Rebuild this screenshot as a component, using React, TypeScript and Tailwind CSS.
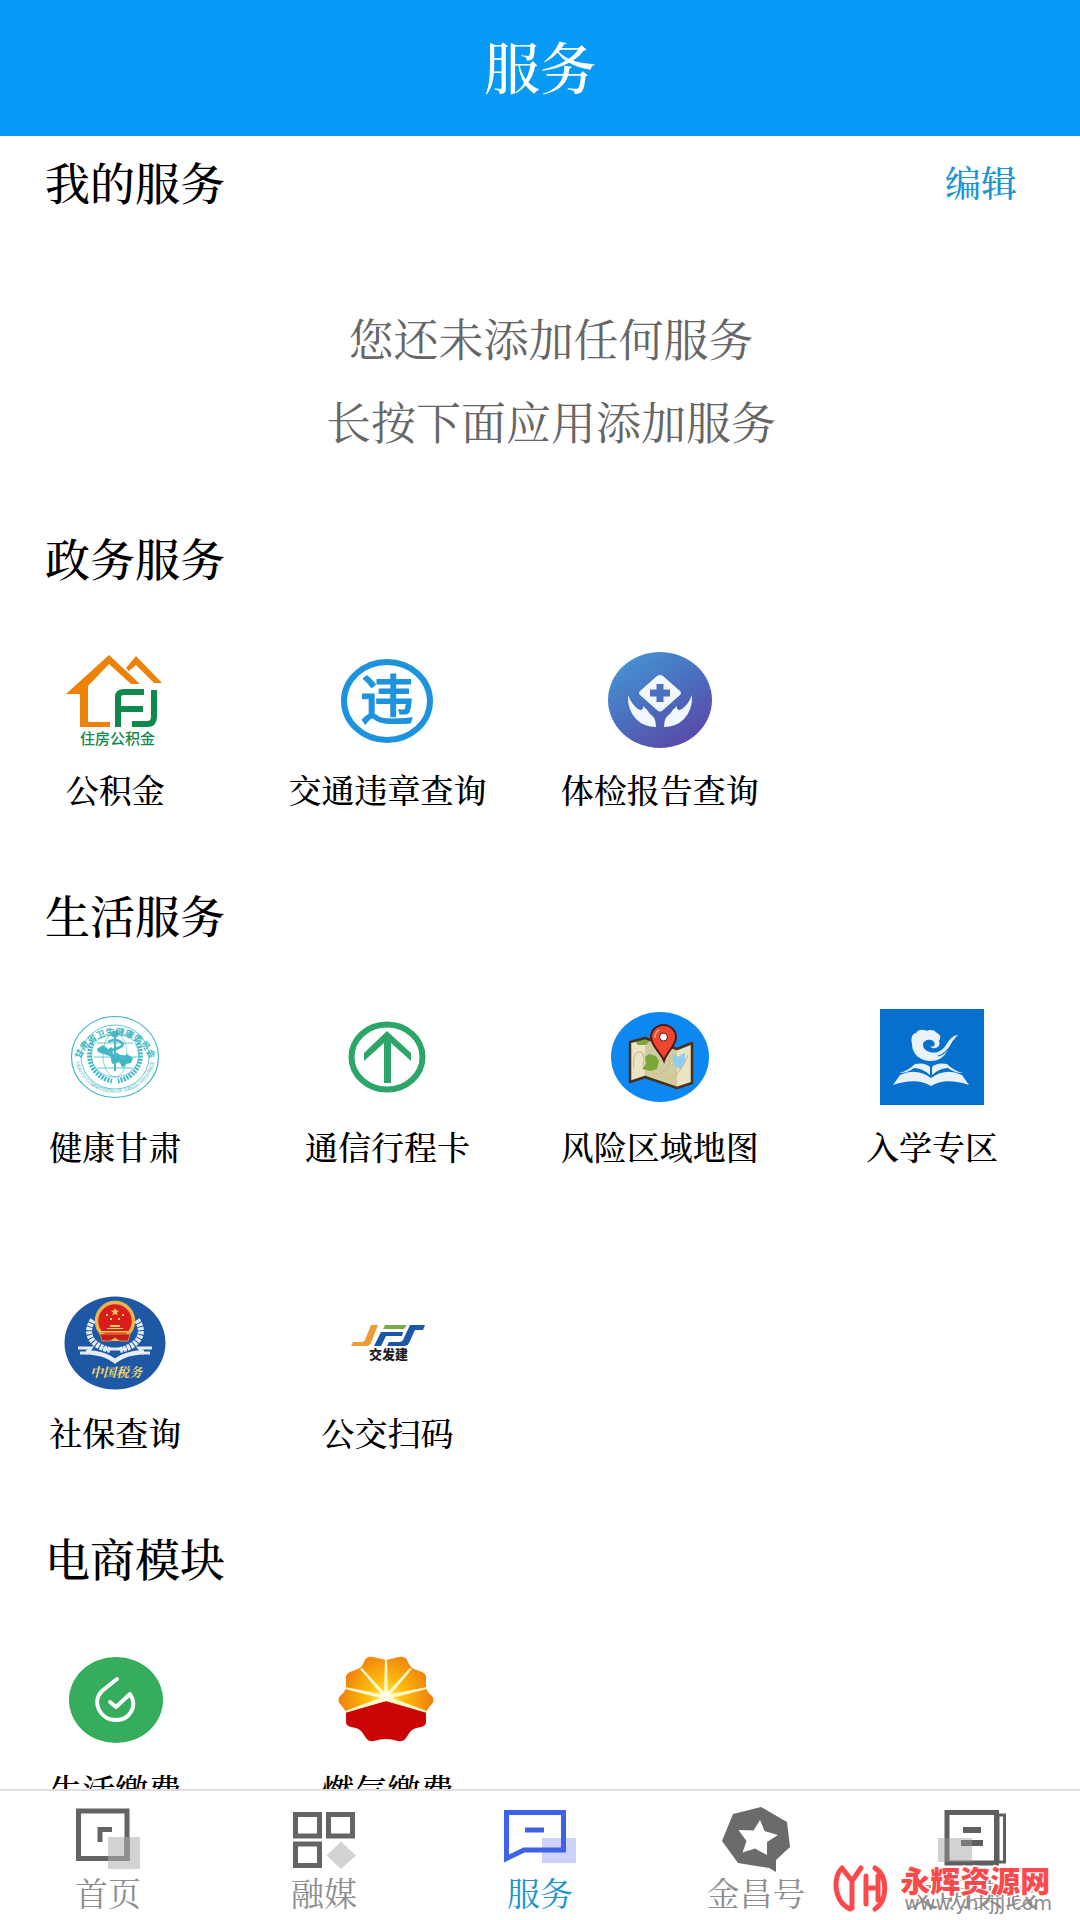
import React from 'react';

type Service = { name: string; icon: React.ReactNode };

const sans = "'Noto Sans CJK SC', sans-serif";
const serif = "'Noto Serif CJK SC', 'Noto Sans CJK SC', serif";

const Icon: React.FC<{ children: React.ReactNode }> = ({ children }) => (
    <svg viewBox="0 0 104 96" className="w-[104px] h-24" aria-hidden="true">{children}</svg>
);

const HousingFundIcon = () => (
    <Icon>
        <path fill="#ee8208" d="M3 42 46 3 77 32H68L46 12 25 34V70H47V75H17V42Z" />
        <path fill="#ee8208" d="M63 16 73 4 99 31H91L73 13 66 19Z" />
        <path fill="none" stroke="#0f8a4c" strokeWidth="6" d="M55 75V45Q55 40 61 40H81M55 57H80M91 38V65Q91 72 84 72H69" />
        <text x="17" y="92" fontSize="15" fontWeight="500" fill="#0f8a4c" style={{ fontFamily: sans }}>住房公积金</text>
    </Icon>
);

const TrafficIcon = () => (
    <Icon>
        <ellipse cx="52" cy="49" rx="43" ry="39" fill="none" stroke="#1c93dc" strokeWidth="6" />
        <text x="52" y="68" fontSize="54" fontWeight="500" textAnchor="middle" fill="#1c93dc" stroke="#1c93dc" strokeLinejoin="round" style={{ fontFamily: sans }}>违</text>
    </Icon>
);

const CheckupIcon = () => (
    <Icon>
        <defs>
            <linearGradient id="checkup" x1="0.1" y1="0" x2="0.8" y2="1">
                <stop offset="0" stopColor="#4597d4" />
                <stop offset="0.5" stopColor="#4b6fc0" />
                <stop offset="1" stopColor="#5b46a4" />
            </linearGradient>
        </defs>
        <ellipse cx="52" cy="48" rx="52" ry="48" fill="url(#checkup)" />
        <g fill="#f1f8fd">
            <path d="M49 24Q52 22 55 24L72 39Q74 41 72 43L55 58Q52 61 49 58L32 43Q30 41 32 39Z" />
            <path d="M20 43Q24 54 32 58Q36 58 35 54Q40 58 42 62Q48 65 48 75Q36 75 28 67Q19 57 20 43Z" />
            <path d="M84 43Q80 54 72 58Q68 58 69 54Q64 58 62 62Q56 65 56 75Q68 75 76 67Q85 57 84 43Z" />
        </g>
        <path stroke="#4b70bf" strokeWidth="7" d="M42 41H62M52 32V50" />
    </Icon>
);

const HealthIcon = () => (
    <Icon>
        <defs>
            <path id="health-top" d="M16 60A36 34 0 1 1 88 60" />
            <path id="health-bottom" d="M12 46A40 38 0 0 0 92 46" />
        </defs>
        <g fill="none" stroke="#43b7c4">
            <ellipse cx="52" cy="48" rx="43.500" ry="40.500" strokeWidth="1.200" />
            <ellipse cx="52" cy="48" rx="34" ry="32" strokeWidth="0.800" />
            <ellipse cx="52" cy="46" rx="24" ry="22" strokeWidth="0.700" />
            <ellipse cx="52" cy="46" rx="12" ry="22" strokeWidth="0.600" />
            <path strokeWidth="0.800" d="M31 48H74M52 38V62M34 34H70M34 59H70" />
            <path strokeWidth="5" strokeDasharray="2 1.200" d="M29 34C22 52 31 68 49 72M75 34C82 52 73 68 55 72" />
            <path strokeWidth="2.500" d="M45 33Q52 29 58 33T49 41T56 47T49 53" />
        </g>
        <g fill="#43b7c4">
            <circle cx="52" cy="25" r="3.500" />
            <path d="M34 40 40 36 45 40 49 38 50 45 55 44 59 49 64 45 70 49 68 54 63 55 60 59 56 53 49 55 47 46 40 45 35 43Z" />
            <path d="M51 28H53V62H51Z" />
            <text fontSize="9" fontWeight="700" style={{ fontFamily: sans }}>
                <textPath href="#health-top" startOffset="50%" textAnchor="middle">甘肃省卫生健康委员会</textPath>
            </text>
            <text fontSize="5" style={{ fontFamily: "'Liberation Sans', sans-serif" }}>
                <textPath href="#health-bottom" startOffset="50%" textAnchor="middle">HEALTH COMMISSION OF GANSU PROVINCE</textPath>
            </text>
        </g>
    </Icon>
);

const TravelIcon = () => (
    <Icon>
        <ellipse cx="52" cy="48" rx="35.500" ry="32.500" fill="none" stroke="#2ca568" strokeWidth="6" />
        <path fill="#2ca568" d="M52 22 76 44V52L56 34V74H49V34L29 52V44Z" />
    </Icon>
);

const MapIcon = () => (
    <Icon>
        <ellipse cx="52" cy="48" rx="49" ry="45" fill="#0d88f0" />
        <path fill="#e9e5c4" d="M22 33 37 29 69 40 84 34V74L69 79 37 68 22 73Z" />
        <path fill="#cfcda0" d="M37 29 69 40V79L37 68Z" />
        <path fill="#7ba63a" d="M27 32 37 29 42 32 38 36 30 36ZM37 48 41 45 48 47 51 52 49 60 43 62 34 60 38 55Z" />
        <path fill="#8fcdf0" d="M64 45 69 48 77 44 77 53 73 61 66 56Z" />
        <path fill="none" stroke="#d9b98c" strokeWidth="1.200" d="M26 60Q24 44 31 43T35 58M44 65Q58 66 61 54T54 43M58 70Q67 68 72 61T80 46" />
        <path fill="none" stroke="#4a2e22" strokeWidth="2.500" strokeLinejoin="round" d="M22 33 37 29 69 40 84 34V74L69 79 37 68 22 73Z" />
        <path fill="#f0442d" stroke="#4a1d1a" strokeWidth="2" d="M56 52C52 42 43 37 43 28A12.500 12 0 0 1 68 28C68 37 59 42 56 52Z" />
        <circle cx="55.500" cy="28" r="4" fill="#fff" stroke="#4a1d1a" />
        <path fill="none" stroke="#ff9d8c" strokeWidth="1.500" d="M47 29Q47 23 51 21" />
    </Icon>
);

const SchoolIcon = () => (
    <Icon>
        <rect width="104" height="96" fill="#0670cd" />
        <g fill="#e9f1f9">
            <path d="M78 26C68 27 67 39 60 42C53 46 43 42 43 36C43 31 51 29 54 33C56 36 53 39 50 37C53 42 62 38 59 32C62 27 59 25 57 24C53 20 49 21 47 22C43 20 38 20 36 24C31 25 31 31 32 35C32 46 41 52 51 52C68 52 68 35 78 26Z" />
            <path d="M19 64Q28 62 35 55Q45 53 50 58V66Q42 59 34 59Q28 64 19 64ZM83 64Q74 62 67 55Q57 53 52 58V66Q60 59 68 59Q74 64 83 64Z" />
            <path d="M13 76 20 66Q36 58 51 69Q66 58 82 66L89 76Q65 68 51 77Q37 68 13 76Z" />
        </g>
        <path fill="none" stroke="#0670cd" strokeWidth="1.200" d="M74 31Q67 45 58 47" />
    </Icon>
);

const TaxIcon = () => (
    <Icon>
        <ellipse cx="52" cy="48" rx="50.500" ry="46.500" fill="#1e58a5" />
        <g fill="none" stroke="#e6edf5">
            <path strokeWidth="6" strokeDasharray="3 1" d="M30 25C21 38 28 51 47 55M74 25C83 38 76 51 57 55" />
            <path strokeWidth="4.500" d="M23 57Q42 58 52 66Q62 58 81 57" />
            <path strokeWidth="3" d="M15 53H28L24 58H17M89 53H76L80 58H87M40 54H64" />
        </g>
        <circle cx="52" cy="26" r="18.500" fill="#d91d1d" stroke="#e8b64b" strokeWidth="3.500" />
        <path fill="#c51d1d" stroke="#e7a943" strokeWidth="0.800" d="M37 39H67L65 46H57L52 43 47 46H39Z" />
        <path fill="#f7d457" d="m52 13 1.200 2.600 2.800.2-2.200 1.800.8 2.800-2.600-1.600-2.600 1.600.8-2.800-2.200-1.800 2.800-.2ZM43 19h2v2h-2ZM59 19h2v2h-2ZM47 23h2v2h-2ZM55 23h2v2h-2ZM47 30h10v2H47ZM44 33h16v1H44ZM39 36h26v1.500H39Z" />
        <text x="53" y="82" fontSize="13" fontWeight="700" fontStyle="italic" textAnchor="middle" fill="#f3d56b" style={{ fontFamily: serif }}>中国税务</text>
    </Icon>
);

const BusIcon = () => (
    <Icon>
        <path fill="#ee9a35" d="M36 30H43L36 48Q35 51 31 51H16L18 47H27Q29 47 30 45Z" />
        <path fill="#76ad47" d="M50 30H72L69 34H48Z" />
        <path fill="#1a57a8" d="M46 37H68L67 41H51L46 51H39ZM75 30H90L88 35H80L74 48Q73 51 69 51H52L54 47H64Q67 47 68 45Z" />
        <text x="34" y="64" fontSize="13" fontWeight="900" fill="#1c1c1c" style={{ fontFamily: sans }}>交发建</text>
    </Icon>
);

const LifePayIcon = () => (
    <Icon>
        <ellipse cx="53" cy="48" rx="47" ry="43" fill="#35ad5c" />
        <path fill="none" stroke="#fff" strokeWidth="4" strokeLinecap="round" strokeLinejoin="round" d="M54 27 39 39C28 50 37 68 53 68C67 68 75 54 67 42L53 55 47 50" />
    </Icon>
);

const GasIcon = () => (
    <Icon>
        <defs>
            <radialGradient id="gas" gradientUnits="userSpaceOnUse" cx="51" cy="46" r="48">
                <stop offset="0" stopColor="#fff04a" />
                <stop offset="0.4" stopColor="#fdb90c" />
                <stop offset="1" stopColor="#ef7d0b" />
            </radialGradient>
        </defs>
        <path fill="url(#gas)" d="M51 8 64 5Q71 4 73 10Q75 15 79 17L87 20Q92 22 91 28V35Q92 40 96 43Q101 48 96 53Q92 57 91 61L51 49 11 61Q10 57 6 53Q1 48 6 43Q10 40 11 35V28Q10 22 15 20L23 17Q27 15 29 10Q31 4 38 5Z" />
        <path fill="#cb0505" d="M51 49 91 60V70Q91 74 86 75Q78 76 75 80L71 86Q68 90 63 89Q57 87 51 87Q45 87 39 89Q34 90 31 86L27 80Q24 76 16 75Q11 74 11 70V60Z" />
        <path fill="#fff8c8" d="M50 8H52L53 40 75 16 77 17 56 42 92 35V37L57 46 92 59V61L51 49 10 61V59L45 46 10 37V35L46 42 25 17 27 16 49 40Z" />
        <circle cx="51" cy="44" r="5" fill="#fffde8" />
    </Icon>
);

const sections: { title: string; services: Service[] }[] = [
    {
        title: '政务服务',
        services: [
            { name: '公积金', icon: <HousingFundIcon /> },
            { name: '交通违章查询', icon: <TrafficIcon /> },
            { name: '体检报告查询', icon: <CheckupIcon /> },
        ],
    },
    {
        title: '生活服务',
        services: [
            { name: '健康甘肃', icon: <HealthIcon /> },
            { name: '通信行程卡', icon: <TravelIcon /> },
            { name: '风险区域地图', icon: <MapIcon /> },
            { name: '入学专区', icon: <SchoolIcon /> },
            { name: '社保查询', icon: <TaxIcon /> },
            { name: '公交扫码', icon: <BusIcon /> },
        ],
    },
    {
        title: '电商模块',
        services: [
            { name: '生活缴费', icon: <LifePayIcon /> },
            { name: '燃气缴费', icon: <GasIcon /> },
        ],
    },
];

const tabs: Service[] = [
    {
        name: '首页',
        icon: (
            <>
                <path fill="#d3d3d3" d="M48 33H80V65H48Z" />
                <path fill="none" stroke="#646464" strokeWidth="5" d="M18.500 7H67V54.500H18.500ZM40 38V25.500H52" />
                <path fill="#8f8f8f" d="M48 52H69V57H48ZM64.500 33H69.500V57H64.500Z" />
            </>
        ),
    },
    {
        name: '融媒',
        icon: (
            <>
                <path fill="none" stroke="#646464" strokeWidth="5" d="M19.500 10.500H43.500V32H19.500ZM52.500 10.500H76.500V32H52.500ZM19.500 40H43.500V61.500H19.500Z" />
                <path fill="#d3d3d3" d="M65 37.500 80 51.500 65 65 50.500 51.500Z" />
            </>
        ),
    },
    {
        name: '服务',
        icon: (
            <>
                <path fill="#cdd2fa" d="M50 34H84V59H50Z" />
                <path fill="none" stroke="#3f63e8" strokeWidth="5" d="M14.500 8.500H71.500V46H32L14.500 54.500ZM33 26H52" />
            </>
        ),
    },
    {
        name: '金昌号',
        icon: (
            <>
                <path fill="#6b6b6b" d="M53 3 79 18 82 43 68 56V68L61 64 30 59 14 37 25 10Z" />
                <path fill="#fff" d="M52 16 56.500 27 70 31 59 38 59 51 47 44.500 34.500 48.500 38.500 37 30.500 26 45.500 26.500Z" />
            </>
        ),
    },
    {
        name: '文明实践',
        icon: (
            <>
                <path fill="none" stroke="#5f5f5f" strokeWidth="5" d="M23 8.500H72.500V59H23Z" />
                <path fill="none" stroke="#5f5f5f" strokeWidth="6" d="M39 26H57M37 39H59" />
                <path fill="none" stroke="#5f5f5f" strokeWidth="3" d="M74 11H80.500V58H74Z" />
                <path fill="#9b9b9b" fillOpacity="0.45" d="M14 34H48V58H14Z" />
            </>
        ),
    },
];

const SectionTitle: React.FC<{ children: React.ReactNode }> = ({ children }) => (
    <h2 className="pl-[45px] text-[45px] leading-[60px] font-medium text-black">{children}</h2>
);

const Watermark = () => (
    <div className="pointer-events-none absolute bottom-2 right-7 flex items-center gap-3">
        <svg viewBox="0 0 56 48" className="w-14 h-12" aria-hidden="true">
            <g fill="none" stroke="#fb4a4c" strokeWidth="5" strokeLinecap="round" strokeLinejoin="round">
                <path d="M10 4C1 12 1 37 18 45M10 4 20 17V44M20 17 29 4" />
                <path d="M34 12V40M34 24H46M46 12V36M43 4C56 12 56 36 43 45" />
            </g>
        </svg>
        <div className="flex flex-col">
            <span className="font-['Noto_Sans_CJK_SC',sans-serif] text-[30px] leading-[30px] font-black text-[#fb4a4c] [paint-order:stroke] [-webkit-text-stroke:3px_white]">永辉资源网</span>
            <span className="pl-1 font-['DejaVu_Sans',sans-serif] text-[19px] leading-[18px] text-[#8c8c8c]">www.yhkjjj.com</span>
        </div>
    </div>
);

export default function App() {
    return (
        <div className="relative flex h-screen flex-col overflow-hidden bg-white font-['Noto_Serif_CJK_SC','Noto_Sans_CJK_SC',serif] text-black">
            <header className="flex h-[136px] shrink-0 items-center justify-center bg-[#0799f6] pb-1.5">
                <h1 className="text-[56px] leading-[72px] font-medium text-white">服务</h1>
            </header>

            <main className="min-h-0 flex-1 overflow-y-auto pt-4 [scrollbar-width:none]">
                <section>
                    <div className="flex items-center justify-between pr-[63px]">
                        <SectionTitle>我的服务</SectionTitle>
                        <button type="button" className="text-[36px] leading-[60px] font-medium text-[#1e94d2]">编辑</button>
                    </div>
                    <div className="pt-[84px] pb-[66px] pl-[22px] text-center text-[45px] leading-[83px] text-[#666]">
                        <p>您还未添加任何服务</p>
                        <p>长按下面应用添加服务</p>
                    </div>
                </section>

                {sections.map((section) => (
                    <section key={section.title} className="pb-[74px]">
                        <SectionTitle>{section.title}</SectionTitle>
                        <div className="grid grid-cols-4 gap-x-[42px] gap-y-[127px] pt-16 pr-[33px]">
                            {section.services.map((service) => (
                                <button key={service.name} type="button" className="flex flex-col items-center gap-[19px]">
                                    {service.icon}
                                    <span className="text-[33px] leading-[44px] font-medium whitespace-nowrap">{service.name}</span>
                                </button>
                            ))}
                        </div>
                    </section>
                ))}
            </main>

            <nav className="grid h-[131px] shrink-0 grid-cols-5 border-t-2 border-[#dedede] bg-white pt-[13px]">
                {tabs.map((tab) => (
                    <a
                        key={tab.name}
                        href="#"
                        className={`flex flex-col items-center ${tab.name === '服务' ? 'text-[#1e94d2]' : 'text-[#8f8f8f]'}`}
                    >
                        <svg viewBox="0 0 96 72" className="w-24 h-[72px]" aria-hidden="true">{tab.icon}</svg>
                        <span className="text-[33px] leading-[32px] whitespace-nowrap">{tab.name}</span>
                    </a>
                ))}
            </nav>

            <Watermark />
        </div>
    );
}
